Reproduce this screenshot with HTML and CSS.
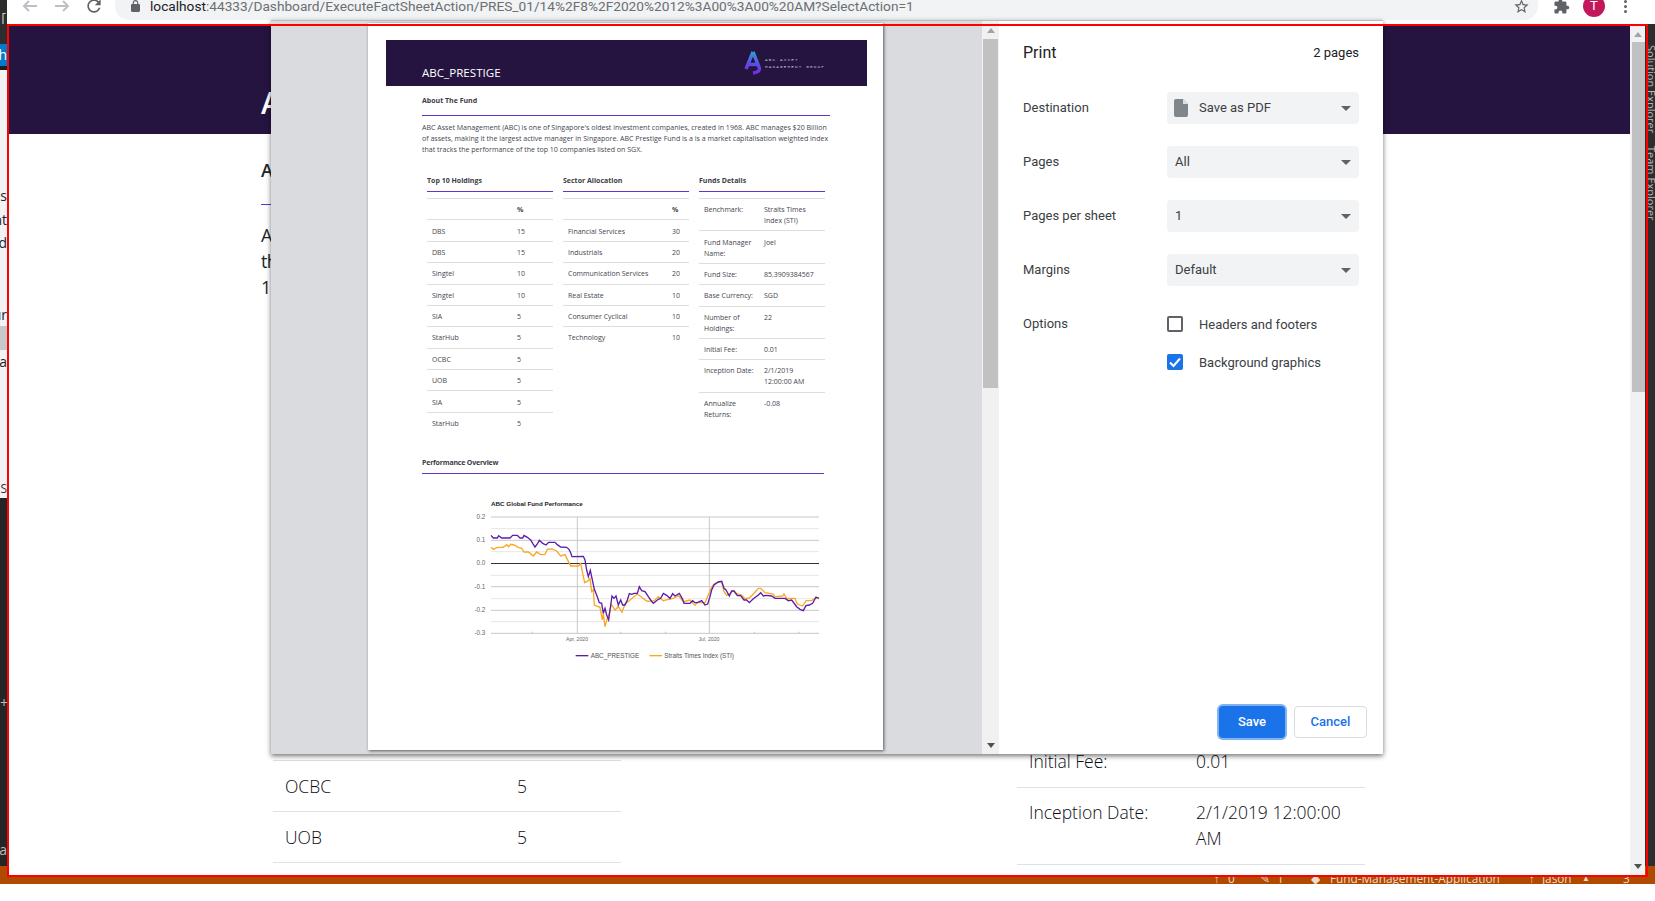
FILE: index.html
```html
<!DOCTYPE html>
<html lang="en">
<head>
<meta charset="utf-8">
<title>Print preview</title>
<link rel="stylesheet" href="styles.css">
</head>
<body>
<div class="screen">
  <header class="top">
    <div class="top-corner">[:</div>
    <div class="chrome">
      <svg class="nav nav-first" viewBox="0 0 16 12"><path class="dim" d="M15 6H2M7 1 2 6l5 5"/></svg>
      <svg class="nav" viewBox="0 0 16 12"><path class="dim" d="M1 6h13M9 1l5 5-5 5"/></svg>
      <svg class="reload" viewBox="0 0 24 24"><path d="M17.65 6.35C16.2 4.9 14.21 4 12 4c-4.42 0-7.99 3.58-7.99 8s3.57 8 7.99 8c3.73 0 6.84-2.55 7.73-6h-2.08c-.82 2.33-3.04 4-5.65 4-3.31 0-6-2.69-6-6s2.69-6 6-6c1.66 0 3.14.69 4.22 1.78L13 11h7V4l-2.35 2.35z"/></svg>
      <div class="omni">
        <svg class="lock" viewBox="0 0 16 21"><path d="M14 7h-1V5c0-2.76-2.24-5-5-5S3 2.24 3 5v2H2C.9 7 0 7.9 0 9v10c0 1.1.9 2 2 2h12c1.1 0 2-.9 2-2V9c0-1.1-.9-2-2-2zM5 7V5c0-1.66 1.34-3 3-3s3 1.34 3 3v2z"/></svg>
        <span class="url"><span class="host">localhost</span>:44333/Dashboard/ExecuteFactSheetAction/PRES_01/14%2F8%2F2020%2012%3A00%3A00%20AM?SelectAction=1</span>
        <svg class="star" viewBox="0 0 24 24"><path d="M22 9.24l-7.19-.62L12 2 9.19 8.63 2 9.24l5.46 4.73L5.82 21 12 17.27 18.18 21l-1.63-7.03L22 9.24zM12 15.4l-3.76 2.27 1-4.28-3.32-2.88 4.38-.38L12 6.1l1.71 4.04 4.38.38-3.32 2.88 1 4.28L12 15.4z"/></svg>
      </div>
      <svg class="puzzle" viewBox="0 0 24 24"><path d="M20.5 11H19V7c0-1.1-.9-2-2-2h-4V3.5C13 2.12 11.88 1 10.5 1S8 2.12 8 3.5V5H4c-1.1 0-1.99.9-1.99 2v3.8H3.5c1.49 0 2.7 1.21 2.7 2.7s-1.21 2.7-2.7 2.7H2V20c0 1.1.9 2 2 2h3.8v-1.5c0-1.49 1.21-2.7 2.7-2.7 1.49 0 2.7 1.21 2.7 2.7V22H17c1.1 0 2-.9 2-2v-4h1.5c1.38 0 2.5-1.12 2.5-2.5S21.88 11 20.5 11z"/></svg>
      <div class="avatar">T</div>
      <div class="kebab"><i></i><i></i><i></i></div>
    </div>
  </header>

  <div class="vs-mid">
    <aside class="vs-left">
      <div class="vl-dark"></div>
      <div class="vl-blue">ch</div>
      <div class="vl-dark2"></div>
      <div class="vl-light">
        <div class="lt lt-first">es</div>
        <div class="lt">nt</div>
        <div class="lt">d</div>
        <div class="lt lt-ur">ur</div>
        <div class="lt-band"></div>
        <div class="lt">na</div>
        <div class="lt lt-s">S</div>
      </div>
      <div class="vl-bottom">
        <div class="vl-plus">+</div>
        <div class="vl-a">a</div>
      </div>
    </aside>
    <aside class="vs-right">
      <span>Solution Explorer</span>
      <span>Team Explorer</span>
    </aside>
  </div>

  <footer class="status">
    <span class="st st-up">↑</span><span class="st st-n1">0</span>
    <span class="st st-pen">✎</span><span class="st st-n2">1</span>
    <span class="st st-dia">◆</span><span class="st st-repo">Fund-Management-Application</span>
    <span class="st st-person">↑</span><span class="st st-jason">Jason</span><span class="st st-caret">▲</span>
    <span class="st st-bell">3</span>
  </footer>

  <main class="browser">
    <div class="page">
      <section class="hero"><h1>ABC_PRESTIGE</h1></section>
      <section class="content">
        <h2 class="about">About The Fund</h2>
        <p class="intro">ABC Asset Management (ABC) is one of Singapore's oldest investment companies, created in 1968. ABC manages $20 Billion of assets, making it<br>the largest active manager in Singapore. ABC Prestige Fund is a is a market capitalisation weighted index that tracks the performance of the top<br>10 companies listed on SGX.</p>
        <div class="cols">
          <div>
            <h3 class="col-head">Top 10 Holdings</h3>
            <div class="bg-row"><span class="bg-k1"></span><b>%</b></div>
            <div class="bg-row"><span class="bg-k1">DBS</span><span>15</span></div>
            <div class="bg-row"><span class="bg-k1">DBS</span><span>15</span></div>
            <div class="bg-row"><span class="bg-k1">Singtel</span><span>10</span></div>
            <div class="bg-row"><span class="bg-k1">Singtel</span><span>10</span></div>
            <div class="bg-row"><span class="bg-k1">SIA</span><span>5</span></div>
            <div class="bg-row"><span class="bg-k1">StarHub</span><span>5</span></div>
            <div class="bg-row"><span class="bg-k1">OCBC</span><span>5</span></div>
            <div class="bg-row"><span class="bg-k1">UOB</span><span>5</span></div>
            <div class="bg-row"><span class="bg-k1">SIA</span><span>5</span></div>
          </div>
          <div>
            <h3 class="col-head">Sector Allocation</h3>
            <div class="bg-row"><span class="bg-k1"></span><b>%</b></div>
            <div class="bg-row"><span class="bg-k1">Financial Services</span><span>30</span></div>
            <div class="bg-row"><span class="bg-k1">Industrials</span><span>20</span></div>
          </div>
          <div class="bg-details">
            <h3 class="col-head">Funds Details</h3>
            <div class="bg-row"><span class="bg-k3">Benchmark:</span><span class="bg-v3">Straits Times<br>Index (STI)</span></div>
            <div class="bg-row"><span class="bg-k3">Fund Manager<br>Name:</span><span class="bg-v3">Joel</span></div>
            <div class="bg-row"><span class="bg-k3">Fund Size:</span><span class="bg-v3">85.3909384567</span></div>
            <div class="bg-row"><span class="bg-k3">Base Currency:</span><span class="bg-v3">SGD</span></div>
            <div class="bg-row"><span class="bg-k3">Number of<br>Holdings:</span><span class="bg-v3">22</span></div>
            <div class="bg-row"><span class="bg-k3">Initial Fee:</span><span class="bg-v3">0.01</span></div>
            <div class="bg-row"><span class="bg-k3">Inception Date:</span><span class="bg-v3">2/1/2019 12:00:00 AM</span></div>
            <div class="bg-row bg-last"></div>
          </div>
        </div>
      </section>
    </div>
    <div class="sbar sbar-page">
      <div class="sb-btn sb-btn-page"><i class="arr-up"></i></div>
      <div class="thumb thumb-page"></div>
      <div class="sb-btn sb-btn-end"><i class="arr-down"></i></div>
    </div>
  </main>

  <div class="dialog">
    <div class="preview">
      <article class="sheet">
        <div class="sheet-head">
          <span class="sheet-title">ABC_PRESTIGE</span>
          <div class="logo">
            <svg class="logo-a" viewBox="0 0 18 25">
              <defs><linearGradient id="lg" gradientUnits="userSpaceOnUse" x1="10" y1="0" x2="6" y2="25"><stop offset="0" stop-color="#2aa7dc"/><stop offset=".55" stop-color="#5a4fe0"/><stop offset="1" stop-color="#7a22e8"/></linearGradient></defs>
              <path class="logo-stroke" d="M9 2 2 19M9 2l6 15q2 5-6 6M5 14.500h9"/>
            </svg>
            <div class="logo-text">ABC ASSET<br>MANAGEMENT GROUP</div>
          </div>
        </div>
        <div class="sheet-body">
          <div class="s-about">About The Fund</div>
          <p class="s-intro">ABC Asset Management (ABC) is one of Singapore's oldest investment companies, created in 1968. ABC manages $20 Billion<br>of assets, making it the largest active manager in Singapore. ABC Prestige Fund is a is a market capitalisation weighted index<br>that tracks the performance of the top 10 companies listed on SGX.</p>
          <div class="s-cols">
            <div>
              <div class="s-head">Top 10 Holdings</div>
              <div class="s-row"><span class="k1"></span><b>%</b></div>
              <div class="s-row"><span class="k1">DBS</span><span>15</span></div>
              <div class="s-row"><span class="k1">DBS</span><span>15</span></div>
              <div class="s-row"><span class="k1">Singtel</span><span>10</span></div>
              <div class="s-row"><span class="k1">Singtel</span><span>10</span></div>
              <div class="s-row"><span class="k1">SIA</span><span>5</span></div>
              <div class="s-row"><span class="k1">StarHub</span><span>5</span></div>
              <div class="s-row"><span class="k1">OCBC</span><span>5</span></div>
              <div class="s-row"><span class="k1">UOB</span><span>5</span></div>
              <div class="s-row"><span class="k1">SIA</span><span>5</span></div>
              <div class="s-row"><span class="k1">StarHub</span><span>5</span></div>
            </div>
            <div>
              <div class="s-head">Sector Allocation</div>
              <div class="s-row"><span class="k2"></span><b>%</b></div>
              <div class="s-row"><span class="k2">Financial Services</span><span>30</span></div>
              <div class="s-row"><span class="k2">Industrials</span><span>20</span></div>
              <div class="s-row"><span class="k2">Communication Services</span><span>20</span></div>
              <div class="s-row"><span class="k2">Real Estate</span><span>10</span></div>
              <div class="s-row"><span class="k2">Consumer Cyclical</span><span>10</span></div>
              <div class="s-row"><span class="k2">Technology</span><span>10</span></div>
            </div>
            <div>
              <div class="s-head">Funds Details</div>
              <div class="s-row"><span class="k3">Benchmark:</span><span>Straits Times<br>Index (STI)</span></div>
              <div class="s-row"><span class="k3">Fund Manager<br>Name:</span><span>Joel</span></div>
              <div class="s-row"><span class="k3">Fund Size:</span><span>85.3909384567</span></div>
              <div class="s-row"><span class="k3">Base Currency:</span><span>SGD</span></div>
              <div class="s-row"><span class="k3">Number of<br>Holdings:</span><span>22</span></div>
              <div class="s-row"><span class="k3">Initial Fee:</span><span>0.01</span></div>
              <div class="s-row"><span class="k3">Inception Date:</span><span>2/1/2019<br>12:00:00 AM</span></div>
              <div class="s-row"><span class="k3">Annualize<br>Returns:</span><span>-0.08</span></div>
            </div>
          </div>
          <div class="s-perf">Performance Overview</div>
          <svg class="chart" viewBox="0 75 1290 585">
            <text class="c-title" x="243" y="167">ABC Global Fund Performance</text>
            <path class="grid-minor" d="M243 236H1227M243 305H1227M243 376H1227M243 446H1227M243 515H1227"/>
            <path class="grid-major" d="M243 201H1227M243 271H1227M243 410H1227M243 481H1227M243 550H1227M502 201V550M898 201V550"/>
            <path class="grid-tick" d="M367 545V550M632 545V550M767 545V550M1033 545V550M1167 545V550"/>
            <path class="grid-zero" d="M243 340.500H1227"/>
            <polyline class="l-orange" points="243,292 250,298 262,292 280,292 290,284 296,290 302,283 312,285 325,292 335,295 342,306 355,306 370,318 380,306 392,314 405,313 412,298 425,297 440,303 452,318 465,314 478,340 482,348 505,348 512,340 518,370 524,398 535,392 540,385 545,425 550,420 553,465 570,472 577,510 580,490 585,530 592,505 598,490 604,463 615,480 625,470 636,487 645,462 660,450 672,440 682,432 695,442 710,453 725,455 735,450 745,440 760,452 775,448 790,445 805,437 820,455 840,450 855,466 862,458 885,458 895,435 905,412 912,402 925,396 935,395 942,425 950,436 960,430 970,422 982,432 995,435 1005,446 1018,444 1030,432 1045,415 1052,415 1065,428 1090,432 1095,440 1118,438 1122,432 1130,445 1155,445 1162,462 1178,468 1188,452 1205,452 1215,445 1227,445"/>
            <polyline class="l-purple" points="243,256 250,264 262,264 266,257 275,264 300,264 308,256 322,256 330,264 338,264 342,256 352,262 362,270 368,280 375,291 382,282 388,271 398,280 408,285 416,277 435,277 442,284 452,291 470,292 477,298 482,308 486,320 520,319 525,330 530,360 535,380 541,361 546,385 553,418 560,435 568,458 575,460 580,490 585,475 590,495 596,510 600,480 606,438 612,445 618,438 625,465 632,450 638,465 645,465 652,450 658,431 665,433 672,430 682,430 688,410 695,422 705,425 715,440 722,450 730,460 745,448 752,445 760,430 770,436 780,445 788,431 795,438 808,430 818,448 822,460 840,460 848,452 855,458 862,458 875,452 885,465 893,462 900,440 905,420 912,405 925,396 935,394 942,415 948,420 958,438 965,423 972,423 982,437 992,437 1002,450 1010,450 1018,458 1030,446 1045,435 1052,428 1060,438 1068,436 1085,438 1095,445 1125,445 1135,452 1145,450 1160,470 1170,478 1180,482 1188,467 1198,465 1208,460 1218,441 1227,445"/>
            <text class="c-axis" x="226" y="207">0.2</text>
            <text class="c-axis" x="226" y="277">0.1</text>
            <text class="c-axis" x="226" y="346">0.0</text>
            <text class="c-axis" x="226" y="416">-0.1</text>
            <text class="c-axis" x="226" y="487">-0.2</text>
            <text class="c-axis" x="226" y="556">-0.3</text>
            <text class="c-date" x="501" y="572">Apr, 2020</text>
            <text class="c-date" x="897" y="572">Jul, 2020</text>
            <path class="l-purple" d="M497 617H535"/>
            <text class="c-legend" x="542" y="623">ABC_PRESTIGE</text>
            <path class="l-orange" d="M718 617H756"/>
            <text class="c-legend" x="763" y="623">Straits Times Index (STI)</text>
          </svg>
        </div>
      </article>
    </div>
    <div class="sbar sbar-preview">
      <div class="sb-btn sb-btn-prev"><i class="arr-up"></i></div>
      <div class="thumb thumb-prev"></div>
      <div class="sb-btn sb-btn-end"><i class="arr-down"></i></div>
    </div>
    <div class="panel">
      <div class="panel-head"><span class="panel-title">Print</span><span class="panel-count">2 pages</span></div>
      <div class="p-row">
        <span class="p-label">Destination</span>
        <div class="select">
          <svg class="file" viewBox="0 0 14 18"><path d="M2 0h7l5 5v11a2 2 0 0 1-2 2H2a2 2 0 0 1-2-2V2a2 2 0 0 1 2-2z"/><path class="file-fold" d="M9 0v5h5"/></svg>
          <span>Save as PDF</span><i class="caret"></i>
        </div>
      </div>
      <div class="p-row"><span class="p-label">Pages</span><div class="select"><span>All</span><i class="caret"></i></div></div>
      <div class="p-row"><span class="p-label">Pages per sheet</span><div class="select"><span>1</span><i class="caret"></i></div></div>
      <div class="p-row"><span class="p-label">Margins</span><div class="select"><span>Default</span><i class="caret"></i></div></div>
      <div class="p-row p-row-opt"><span class="p-label">Options</span><div class="check"><i class="box"></i><span>Headers and footers</span></div></div>
      <div class="p-row p-row-opt2"><span class="p-label"></span><div class="check"><i class="box box-on"><svg viewBox="0 0 16 16"><path d="M3 8.500 6.500 12 13 4.500"/></svg></i><span>Background graphics</span></div></div>
      <div class="panel-foot"><button class="btn-save">Save</button><button class="btn-cancel">Cancel</button></div>
    </div>
  </div>

  <div class="red-frame"></div>
</div>
</body>
</html>
```
FILE: styles.css
```css
* { box-sizing: border-box; }
html, body { margin: 0; padding: 0; }
body { width: 1655px; height: 901px; overflow: hidden; background: #fff; font-family: "Open Sans", sans-serif; }
.screen { position: relative; width: 1655px; height: 884px; display: flex; flex-direction: column; background: #2d2d30; overflow: hidden; }

/* browser toolbar */
.top { height: 24px; display: flex; flex: none; }
.top-corner { width: 7px; background: #2d2d30; color: #ccc; font: 12px/12px "Liberation Mono", monospace; padding-top: 13px; overflow: hidden; white-space: nowrap; }
.chrome { flex: 1; background: #fff; display: flex; align-items: flex-start; }
.nav { width: 16px; height: 12px; margin-left: 16px; flex: none; }
.nav-first { margin-left: 15px; }
.dim { fill: none; stroke: #bdc1c6; stroke-width: 2; }
.reload { width: 20px; height: 20px; margin: -4px 0 0 14px; fill: #5f6368; flex: none; }
.omni { width: 1423px; height: 20px; margin-left: 11px; background: #f1f3f4; border-radius: 0 0 14px 14px; display: flex; align-items: center; padding: 0 0 8px 16px; flex: none; }
.lock { width: 9px; height: 12px; fill: #5f6368; flex: none; }
.url { margin-left: 10px; font: 13.700px/16px Roboto, sans-serif; color: #6b6f73; white-space: nowrap; flex: 1; }
.host { color: #202124; }
.star { width: 17px; height: 17px; fill: #5f6368; margin-right: 8px; flex: none; }
.puzzle { width: 17px; height: 17px; fill: #5f6368; margin: -2px 0 0 15px; flex: none; }
.avatar { width: 22px; height: 22px; margin: -5px 0 0 13px; border-radius: 50%; background: #c2185b; color: #fff; font: 13px/22px Roboto, sans-serif; text-align: center; flex: none; }
.kebab { margin: 0 0 0 19px; display: flex; flex-direction: column; gap: 2px; flex: none; }
.kebab i { width: 3px; height: 3px; border-radius: 50%; background: #5f6368; }

/* IDE behind the browser */
.vs-mid { flex: 1; display: flex; justify-content: space-between; min-height: 0; }
.vs-left { width: 7px; display: flex; flex-direction: column; font-size: 14px; }
.vl-dark { height: 20px; background: #2d2d30; }
.vl-blue { height: 22px; background: #007acc; color: #fff; line-height: 22px; display: flex; justify-content: flex-end; white-space: nowrap; }
.vl-dark2 { height: 4px; background: #1e1e1e; }
.vl-light { height: 428px; background: #f3f3f3; color: #222; padding-top: 114px; }
.lt { height: 23.500px; line-height: 23px; display: flex; justify-content: flex-end; white-space: nowrap; }
.lt-ur { margin-top: 48px; }
.lt-band { height: 24px; background: #c8c8c8; margin-top: 0; }
.lt-s { margin-top: 103px; color: #333; font-size: 12px; }
.vl-bottom { flex: 1; background: #252526; color: #bbb; padding-top: 196px; }
.vl-plus { line-height: 18px; }
.vl-a { margin-top: 129px; line-height: 18px; display: flex; justify-content: flex-end; }
.vs-right { width: 8px; display: flex; flex-direction: row; writing-mode: vertical-rl; background: #2d2d30; color: #b8b8b8; font: 11px/8px "Open Sans", sans-serif; padding-top: 21px; gap: 13px; overflow: hidden; white-space: nowrap; }

.status { height: 18px; flex: none; background: #b04a00; color: #ecdccc; display: flex; font: 11.800px/14px "Open Sans", sans-serif; padding-top: 5px; overflow: hidden; white-space: nowrap; }
.st-up { margin-left: 1214px; }
.st-n1 { margin-left: 8px; width: 32px; }
.st-pen { width: 17px; }
.st-n2 { width: 34px; }
.st-dia { width: 19px; }
.st-repo { width: 199px; }
.st-person { width: 13px; }
.st-jason { width: 40px; }
.st-caret { width: 41px; font-size: 8px; }
.st-bell { width: 12px; }

/* browser page behind the dialog */
.browser { position: absolute; left: 9px; top: 26px; width: 1636px; height: 849px; background: #fff; display: flex; }
.page { flex: 1; min-width: 0; overflow: hidden; color: #212529; }
.hero { height: 108px; background: #251440; padding: 57px 0 0 252px; }
.hero h1 { margin: 0; color: #fff; font-size: 30px; line-height: 40px; font-weight: 600; }
.content { padding-left: 252px; width: 1361px; }
.about { margin: 23px 0 0; padding-bottom: 21px; font-size: 18px; line-height: 26px; font-weight: 600; border-bottom: 1px solid #5f36c9; }
.intro { margin: 17px 0 0; font-size: 18px; line-height: 26px; white-space: nowrap; letter-spacing: -.7px; }
.cols { display: grid; grid-template-columns: repeat(3, 348px); gap: 24px; margin: 40px 0 0 12px; }
.col-head { margin: 0 0 16px; padding-bottom: 20px; font-size: 18px; line-height: 26px; font-weight: 600; border-bottom: 1px solid #5f36c9; }
.bg-row { display: flex; border-top: 1px solid #dee2e6; padding: 12px 0 12px 12px; font-size: 17.500px; line-height: 26px; font-weight: 300; color: #0c0c14; }
.bg-row:last-child { min-height: 51px; }
.bg-details .bg-row { padding: 11px 0 13px 12px; }
.bg-k1 { width: 232px; flex: none; }
.bg-k3 { width: 167px; flex: none; }
.bg-v3 { flex: 1; padding-right: 8px; }

/* scrollbars */
.sbar { flex: none; background: #f1f1f1; display: flex; flex-direction: column; }
.sbar-page { width: 15px; }
.sbar-preview { width: 17px; }
.sb-btn { display: flex; align-items: center; justify-content: center; flex: none; }
.sb-btn-page { height: 16px; }
.sb-btn-prev { height: 18px; }
.sb-btn-end { height: 16px; margin-top: auto; margin-bottom: 1px; }
.arr-up { width: 0; height: 0; border: 4px solid transparent; border-top: 0; border-bottom: 5px solid #a3a3a3; }
.arr-down { width: 0; height: 0; border: 4px solid transparent; border-bottom: 0; border-top: 5px solid #505050; }
.thumb { background: #c1c1c1; flex: none; }
.thumb-page { height: 350px; margin-left: 2px; }
.thumb-prev { height: 349px; margin: 0 1px; }

/* print dialog */
.dialog { position: absolute; left: 271px; top: 20px; width: 1112px; height: 734px; display: flex; background: #fff; box-shadow: 0 2px 5px rgba(0, 0, 0, .55); z-index: 2; border-top: 1px solid #bbb; }
.preview { width: 711px; flex: none; background: #dadbdf; padding: 2px 0 0 97px; }
.panel { flex: 1; background: #fff; display: flex; flex-direction: column; padding: 0 24px 16px; font-family: Roboto, sans-serif; font-size: 13px; color: #3c4043; }

/* sheet */
.sheet { width: 515px; height: 727px; background: #fff; box-shadow: 1px 1px 3px rgba(0, 0, 0, .6); padding: 17px 16px 0 18px; color: #45454f; font-size: 7px; line-height: 11px; overflow: hidden; }
.sheet-head { height: 46px; background: #251440; display: flex; justify-content: space-between; padding-left: 36px; }
.sheet-title { color: #fff; font-size: 11.600px; line-height: 14px; margin-top: 26px; }
.logo { display: flex; margin: 10px 42px 0 0; }
.logo-a { width: 18px; height: 25px; flex: none; }
.logo-stroke { fill: none; stroke: url(#lg); stroke-width: 3.400; }
.logo-text { color: #c4c0d0; font: 4.300px/7px "Liberation Mono", monospace; letter-spacing: 1.170px; margin: 6px 0 0 3px; white-space: nowrap; }
.sheet-body { padding-left: 36px; }
.s-about { margin-top: 8.500px; padding-bottom: 9.500px; width: 408px; font-weight: 700; border-bottom: 1px solid #5f36c9; color: #3c3c46; }
.s-intro { margin: 6px 0 0; white-space: nowrap; font-size: 7.050px; }
.s-cols { display: grid; grid-template-columns: repeat(3, 126px); gap: 10px; margin: 19.500px 0 0 5px; height: 259px; }
.s-head { margin-bottom: 6px; padding-bottom: 5.500px; font-weight: 700; border-bottom: 1px solid #5f36c9; color: #3c3c46; white-space: nowrap; }
.s-row { display: flex; border-top: 1px solid #ddd; padding: 5.200px 0 4.200px 5px; white-space: nowrap; }
.k1 { width: 85px; flex: none; }
.k2 { width: 104px; flex: none; }
.k3 { width: 60px; flex: none; }
.s-perf { margin-top: 23px; width: 402px; padding-bottom: 5px; font-weight: 700; letter-spacing: -.2px; border-bottom: 1px solid #5f36c9; color: #3c3c46; }
.chart { display: block; width: 430px; height: 195px; margin: 1.500px 0 0 -12px; }
.grid-minor { stroke: #e6e6e6; stroke-width: 3; fill: none; }
.grid-major { stroke: #c8c8c8; stroke-width: 3; fill: none; }
.grid-tick { stroke: #aaa; stroke-width: 2; fill: none; }
.grid-zero { stroke: #333; stroke-width: 3; fill: none; }
.l-purple { fill: none; stroke: #5a1fa8; stroke-width: 4; }
.l-orange { fill: none; stroke: #f9a825; stroke-width: 4; }
.c-title { font: 700 18.800px "Liberation Sans", sans-serif; fill: #222; }
.c-axis { font: 19px "Liberation Sans", sans-serif; fill: #666; text-anchor: end; }
.c-date { font: 15.500px "Liberation Sans", sans-serif; fill: #666; text-anchor: middle; }
.c-legend { font: 19px "Liberation Sans", sans-serif; fill: #555; }

/* settings */
.panel-head { display: flex; justify-content: space-between; align-items: center; height: 32px; margin: 15px 0 24px; flex: none; }
.panel-title { font-size: 16px; color: #202124; }
.panel-count { color: #202124; }
.p-row { display: flex; align-items: center; height: 32px; margin-bottom: 22px; flex: none; }
.p-label { width: 144px; flex: none; margin-top: -2px; }
.select { width: 192px; height: 32px; border-radius: 4px; background: #f1f3f4; display: flex; align-items: center; padding: 0 8px; }
.select span { margin-top: -2px; }
.file { width: 14px; height: 18px; fill: #80868b; margin: 0 11px 0 -1px; flex: none; }
.file-fold { fill: #dfe1e5; stroke: none; }
.caret { width: 0; height: 0; border: 5px solid transparent; border-bottom: 0; border-top: 5px solid #5f6368; margin-left: auto; }
.p-row-opt { height: 16px; margin: 8px 0 0; }
.p-row-opt2 { height: 16px; margin: 22px 0 0; }
.check { display: flex; align-items: center; gap: 16px; }
.box { width: 16px; height: 16px; border: 2px solid #5f6368; border-radius: 2px; flex: none; display: block; }
.box-on { border: 0; background: #1a73e8; }
.box-on svg { display: block; fill: none; stroke: #fff; stroke-width: 2; }
.panel-foot { margin: auto -8px 0 0; display: flex; justify-content: flex-end; align-items: center; }
.btn-save { width: 66px; height: 32px; margin-right: 9px; border: 0; border-radius: 4px; background: #1a73e8; color: #fff; font: 500 13px Roboto, sans-serif; box-shadow: 0 0 0 2px rgba(26, 115, 232, .55); padding: 0 0 2px; }
.btn-cancel { width: 73px; height: 32px; border: 1px solid #dadce0; border-radius: 4px; background: #fff; color: #1a73e8; font: 500 13px Roboto, sans-serif; padding: 0 0 2px; }

.red-frame { position: absolute; left: 7px; top: 24px; width: 1641px; height: 853px; border: 2px solid #f00; z-index: 5; pointer-events: none; }
```
